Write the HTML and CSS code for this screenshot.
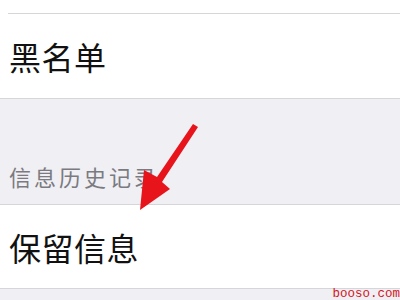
FILE: index.html
```html
<!DOCTYPE html>
<html lang="zh">
<head>
<meta charset="utf-8">
<link rel="stylesheet" href="styles.css">
</head>
<body>
<div class="screen">
  <div class="stub"><div class="inset-line"></div></div>
  <div class="row row-first"><span class="label">黑名单</span></div>
  <div class="gap"><span class="section-title">信息历史记录</span></div>
  <div class="row row-second"><span class="label">保留信息</span></div>
  <div class="rest"></div>
  <svg class="arrow" width="400" height="300" viewBox="0 0 400 300">
    <path d="M198 127 L193 124 L157 177 L144 170 L140 210 L170 189 L162 182 Z" fill="#e8141c"/>
  </svg>
  <span class="watermark">booso.com</span>
</div>
</body>
</html>
```
FILE: styles.css
```css
html, body {
  margin: 0;
  padding: 0;
}
body {
  background: #efeff4;
  font-family: "Noto Sans CJK SC", "Noto Sans", sans-serif;
}
.screen {
  position: relative;
  width: 400px;
  height: 300px;
  overflow: hidden;
  display: flex;
  flex-direction: column;
  background: #efeff4;
}
.stub {
  height: 14px;
  background: #fff;
  display: flex;
  flex-direction: column;
  justify-content: flex-end;
  flex-shrink: 0;
}
.inset-line {
  height: 1px;
  margin-left: 8px;
  background: #d6d6da;
}
.row {
  background: #fff;
  display: flex;
  align-items: center;
  padding-left: 9px;
  flex-shrink: 0;
  box-sizing: border-box;
}
.row-first {
  height: 85px;
  border-bottom: 1px solid #d6d6da;
}
.row-second {
  height: 85px;
  border-top: 1px solid #d6d6da;
  border-bottom: 1px solid #d6d6da;
}
.label {
  font-size: 32px;
  color: #111;
  letter-spacing: 0.5px;
  line-height: 1;
}
.gap {
  height: 105px;
  flex-shrink: 0;
  display: flex;
  align-items: flex-end;
  padding-left: 9px;
  padding-bottom: 17px;
  box-sizing: border-box;
}
.section-title {
  font-size: 22px;
  color: #7a7a80;
  letter-spacing: 3px;
  line-height: 1;
}
.rest {
  flex: 1;
}
.arrow {
  position: absolute;
  left: 0;
  top: 0;
}
.watermark {
  position: absolute;
  right: 0;
  bottom: 0;
  font-family: "Liberation Mono", monospace;
  font-size: 12.5px;
  line-height: 12px;
  color: #d4141c;
}
```
